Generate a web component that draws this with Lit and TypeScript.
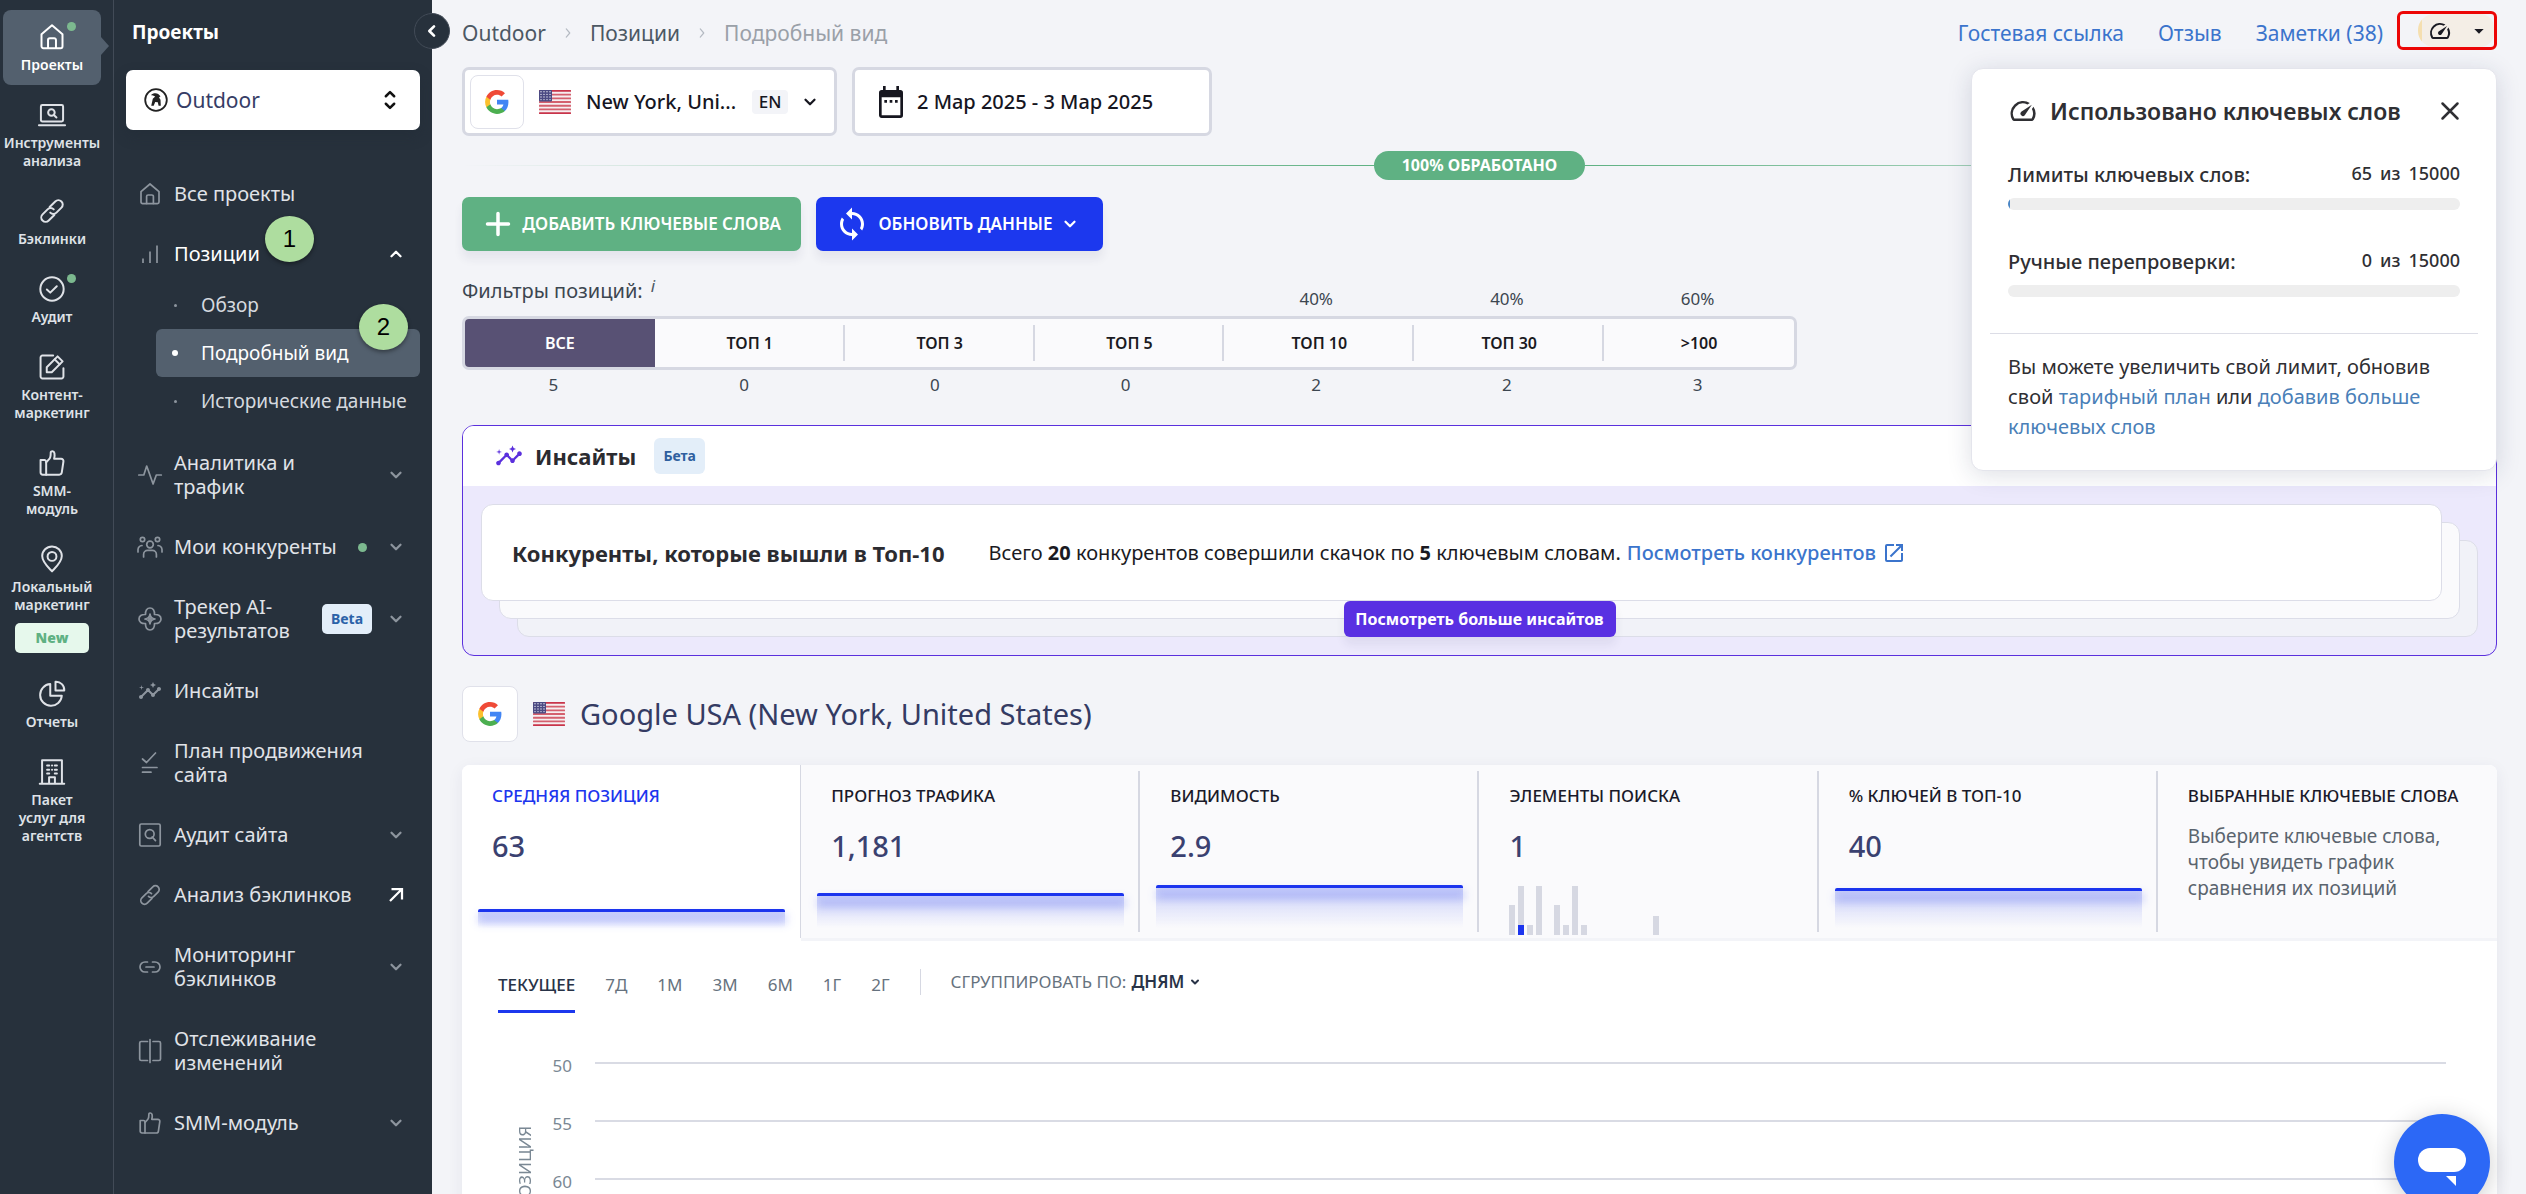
import { LitElement, html, css, svg, nothing } from "lit";
import { customElement, property, state } from "lit/decorators.js";
import { classMap } from "lit/directives/class-map.js";
import { styleMap } from "lit/directives/style-map.js";

const line = (body: unknown) => svg`<g fill="none" stroke="currentColor" stroke-linecap="round" stroke-linejoin="round">${body}</g>`;
const solid = (d: string) => svg`<path fill="currentColor" d=${d}></path>`;

const ICONS: Record<string, unknown> = {
  home: line(svg`<path d="M3 9.6 12 2l9 7.6V20a1.6 1.6 0 0 1-1.600 1.600H4.600A1.600 1.600 0 0 1 3 20z"></path><path d="M8.600 21.500v-7a1.500 1.500 0 0 1 1.500-1.500h3.800a1.500 1.500 0 0 1 1.500 1.500v7"></path>`),
  laptop: line(svg`<rect x="2.500" y="3.500" width="19" height="14" rx="1.200"></rect><path d="M0.800 20.800h22.400"></path><circle cx="11.500" cy="9.800" r="2.800"></circle><path d="m13.600 12 2.200 2.200"></path>`),
  link: line(svg`<path d="m10 8.600 4.800-4.800a3.700 3.700 0 0 1 5.300 5.300l-4.300 4.300a3.700 3.700 0 0 1-5.300 0"></path><path d="m14 15.400-4.800 4.800a3.700 3.700 0 0 1-5.300-5.300l4.300-4.300a3.700 3.700 0 0 1 5.300 0"></path>`),
  check: line(svg`<circle cx="12" cy="12" r="10"></circle><path d="m7.600 12.400 2.900 2.700 5.600-5.500"></path>`),
  edit: line(svg`<path d="M13 2.200H3.800a1.600 1.600 0 0 0-1.600 1.600v16.400a1.600 1.600 0 0 0 1.600 1.600h16.400a1.600 1.600 0 0 0 1.600-1.600V13"></path><path d="M7.500 16.500v-4.300l9.300-9.300 4.300 4.300-9.300 9.300z"></path><path d="m14.300 5.500 4.200 4.200"></path>`),
  thumb: line(svg`<path d="M2.200 9.500h3.300a1.500 1.500 0 0 1 1.500 1.500v11H4a1.800 1.800 0 0 1-1.800-1.800z"></path><path d="M7 11.500 9.900 8.200c.8-.9 1-3.300 1-5.200 0-1.400 2.800-1.500 3.200.6.400 2-.3 4.700-.3 4.700h6c1.300 0 2.200 1.200 2 2.400l-1.400 9.400a2.200 2.200 0 0 1-2.200 1.900H7"></path>`),
  pin: line(svg`<path d="M12 22.600C9 19.300 3.600 14.600 3.600 9.400a8.400 8.200 0 0 1 16.800 0c0 5.200-5.400 9.900-8.400 13.200z"></path><circle cx="12" cy="9.800" r="3.800"></circle>`),
  pie: line(svg`<path d="M10.500 3.500a9.300 9.300 0 1 0 9.900 10h-9.900z"></path><path d="M15 1.500a7 7 0 0 1 7.500 7.500H15z"></path>`),
  building: line(svg`<path d="M3.500 22V2h17v20M1.500 22h21M9.500 22v-5.500h5V22"></path><path d="M7.800 6.500h1.800M14.400 6.500h1.800M7.800 10h1.800M14.400 10h1.800M7.800 13.300h1.800M14.400 13.300h1.800M12 6.500h.1M12 10h.1"></path>`),
  bars: line(svg`<path d="M5 21v-4.500M12 21V9.500M19 21V3.500" stroke-linecap="butt"></path>`),
  pulse: line(svg`<path d="M.8 12h5l2.900-9 6.400 18 3.200-9h5"></path>`),
  people: line(svg`<circle cx="12" cy="9.500" r="3.300"></circle><path d="M5.600 22v-2.600a4 4 0 0 1 4-4h4.800a4 4 0 0 1 4 4V22"></path><circle cx="4.500" cy="4.500" r="2.200"></circle><circle cx="19.500" cy="4.500" r="2.200"></circle><path d="M0 17v-2.500a4.500 4.500 0 0 1 4-4M24 17v-2.500a4.500 4.500 0 0 0-4-4"></path>`),
  ai: line(svg`<path d="M7.500 7.500C7.300 3.500 9 1 12 1s4.700 2.500 4.500 6.500C20.500 7.300 23 9 23 12s-2.500 4.700-6.500 4.500C16.700 20.500 15 23 12 23s-4.700-2.500-4.500-6.500C3.500 16.700 1 15 1 12s2.500-4.700 6.500-4.500z"></path><path d="M12 7c.5 3.400 1.600 4.500 5 5-3.400.5-4.500 1.600-5 5-.5-3.400-1.600-4.500-5-5 3.400-.5 4.500-1.600 5-5z"></path><circle cx="12" cy="12" r="1.200"></circle>`),
  insights: solid("M21 8c-1.450 0-2.260 1.440-1.930 2.510l-3.550 3.560c-.3-.09-.74-.09-1.040 0l-2.550-2.550C12.270 10.450 11.460 9 10 9c-1.450 0-2.270 1.440-1.930 2.520l-4.560 4.550C2.440 15.740 1 16.550 1 18c0 1.100.9 2 2 2 1.450 0 2.260-1.440 1.930-2.510l4.550-4.560c.3.09.74.09 1.040 0l2.550 2.550C12.730 16.550 13.540 18 15 18c1.450 0 2.270-1.440 1.930-2.520l3.560-3.550C21.560 12.260 23 11.450 23 10c0-1.100-.9-2-2-2zM15 9l.94-2.070L18 6l-2.060-.93L15 3l-.92 2.070L12 6l2.080.93zM3.500 11 4 9l2-.5L4 8l-.5-2L3 8l-2 .5L3 9z"),
  plan: line(svg`<path d="m4.500 8 4 3.500L17.500 2M4.500 16.500H19M4.500 21.200h8.500"></path>`),
  audit: line(svg`<rect x="1.800" y="1" width="20.400" height="22" rx="1.500"></rect><circle cx="11.700" cy="11" r="4.400"></circle><path d="m14.200 14 3.300 3.600"></path>`),
  chainFlat: line(svg`<path d="M9.500 17H7A5 5 0 0 1 7 7h2.500M14.500 7H17a5 5 0 0 1 0 10h-2.500M8 12h8"></path>`),
  compare: line(svg`<path d="M9.500 2.500H3.200A1.500 1.500 0 0 0 1.700 4v16a1.500 1.500 0 0 0 1.500 1.500h6.300M12 .5v23M15 2.500h6A1.500 1.500 0 0 1 22.500 4v16a1.500 1.500 0 0 1-1.500 1.500h-6"></path>`),
  down: line(svg`<path d="m6 9 6 6 6-6"></path>`),
  up: line(svg`<path d="m6 15 6-6 6 6"></path>`),
  left: line(svg`<path d="m15 5-7 7 7 7"></path>`),
  right: line(svg`<path d="m9 5 6 7-6 7"></path>`),
  external: line(svg`<path d="M4 20 20 4M6 4h14v14" stroke-linecap="butt" stroke-linejoin="miter"></path>`),
  updown: line(svg`<path d="m7 7.500 5-5 5 5M7 16.500l5 5 5-5"></path>`),
  plus: line(svg`<path d="M12 3v18M3 12h18"></path>`),
  close: line(svg`<path d="M3 3l18 18M21 3 3 21"></path>`),
  caret: solid("M5 9h14l-7 7z"),
  gauge: solid("M20.380 8.570l-1.230 1.850a8 8 0 0 1-.22 7.580H5.070A8 8 0 0 1 15.580 6.850l1.850-1.230A10 10 0 0 0 3.350 19a2 2 0 0 0 1.720 1h13.850a2 2 0 0 0 1.740-1 10 10 0 0 0-.27-10.440zm-9.790 6.840a2 2 0 0 0 2.830 0l5.660-8.490-8.490 5.660a2 2 0 0 0 0 2.830z"),
  sync: solid("M12 4V1L8 5l4 4V6c3.310 0 6 2.690 6 6 0 1.010-.25 1.970-.7 2.800l1.460 1.460C19.540 15.030 20 13.570 20 12c0-4.420-3.580-8-8-8zm0 14c-3.310 0-6-2.690-6-6 0-1.010.25-1.970.7-2.800L5.240 7.740C4.460 8.970 4 10.430 4 12c0 4.420 3.580 8 8 8v3l4-4-4-4v3z"),
  open: solid("M19 19H5V5h7V3H5a2 2 0 0 0-2 2v14a2 2 0 0 0 2 2h14c1.100 0 2-.9 2-2v-7h-2v7zM14 3v2h3.590l-9.830 9.830 1.410 1.410L19 6.410V10h2V3h-7z"),
  calendar: solid("M9 10.500H7v2h2zm4 0h-2v2h2zm4 0h-2v2h2zM19 3h-1V0h-2v3H8V0H6v3H5a2 2 0 0 0-2 2v17c0 1.100.9 2 2 2h14a2 2 0 0 0 2-2V5a2 2 0 0 0-2-2zm0 19H5V8.500h14z"),
  google: svg`<path fill="#4285f4" d="M22.560 12.250c0-.78-.07-1.530-.2-2.250H12v4.260h5.920c-.26 1.370-1.040 2.530-2.210 3.310v2.770h3.570c2.080-1.920 3.280-4.740 3.280-8.090z"></path><path fill="#4caf50" d="M12 23c2.970 0 5.460-.98 7.280-2.660l-3.570-2.770c-.98.66-2.230 1.060-3.710 1.060-2.860 0-5.290-1.930-6.160-4.530H2.180v2.840C3.990 20.530 7.700 23 12 23z"></path><path fill="#fbc02d" d="M5.840 14.090c-.22-.66-.35-1.360-.35-2.090s.13-1.430.35-2.090V7.070H2.180C1.430 8.550 1 10.220 1 12s.43 3.450 1.180 4.930l3.660-2.840z"></path><path fill="#ef4a37" d="M12 5.380c1.620 0 3.060.56 4.210 1.640l3.150-3.150C17.450 2.090 14.970 1 12 1 7.700 1 3.990 3.470 2.180 7.070l3.660 2.840c.87-2.600 3.300-4.530 6.160-4.530z"></path>`,
  outdoor: svg`<circle cx="12" cy="12" r="10.800" fill="#fff" stroke="#222" stroke-width="1.800"></circle><path fill="#222" d="M7 7.200c1.500-1.900 5-2.400 7.200-1.200l2.300 2.300-1.500 1.200 1.500 2.300.3 6h-2.200l-.8-3.600-2.600-.2-1.500 3.800H7.200l1-4.300.6-2.700 2.400-2.300c-1.500-.9-2.900-1.200-4.200-1.300z"></path>`,
};

const icon = (name: string, cls = "") =>
  html`<svg class="icon ${cls}" viewBox="0 0 24 24" aria-hidden="true">${ICONS[name]}</svg>`;

const flag = () => html`<svg class="flag" viewBox="0 0 32 24" role="img" aria-label="США">
  <rect width="32" height="24" rx="2" fill="#f6eef0"></rect>
  ${[0, 1, 2, 3, 4, 5, 6].map((i) => svg`<rect x="0" y=${i * 3.7} width="32" height="1.850" rx="0.500" fill=${i === 0 || i === 6 ? "#c8344a" : "#d4606e"}></rect>`)}
  <rect width="13" height="11.500" rx="1" fill="#4b4a83"></rect>
  ${[0, 1, 2, 3].map((r) => [0, 1, 2, 3].map((c) => svg`<circle cx=${2 + c * 3} cy=${1.8 + r * 2.6} r="0.700" fill="#e8e8f4"></circle>`))}
</svg>`;

const shared = css`
  * { box-sizing: border-box; }
  button, select { font: inherit; color: inherit; background: none; border: 0; padding: 0; margin: 0; cursor: pointer; text-align: left; }
  a { text-decoration: none; }
  .icon { width: 24px; height: 24px; stroke-width: 2; flex: none; display: block; overflow: visible; }
  .solid { stroke-width: 0; }
  .flag { width: 32px; height: 24px; flex: none; display: block; }
`;

@customElement("app-rail")
class AppRail extends LitElement {
  static styles = [shared, css`
    :host { display: block; background: #27313c; border-right: 1px solid #424b57; }
    nav { display: flex; flex-direction: column; gap: 3px; padding: 10px 12px 0 3px; }
    .item { position: relative; display: flex; flex-direction: column; align-items: center; gap: 5px; padding: 13px 0 11px;
      color: #dfe2e7; font-size: 14px; line-height: 18px; font-weight: 600; text-align: center; border-radius: 8px; white-space: pre-line; }
    .item .icon { width: 28px; height: 28px; stroke-width: 1.700; }
    .current { background: #53606e; color: #fff; }
    .current::after { content: ""; position: absolute; left: 100%; top: 27px; border: 9px solid transparent; border-left: 8px solid #53606e; border-right: 0; }
    .dot { position: absolute; top: 12px; left: 64px; width: 9px; height: 9px; border-radius: 50%; background: #7cb98f; }
    .new { width: 74px; height: 30px; margin-top: 4px; border-radius: 5px; background: #e6f8ec; color: #5fb183; line-height: 30px; }
  `];
  private items = [
    { t: "Проекты", i: "home", dot: true, on: true }, { t: "Инструменты\nанализа", i: "laptop" }, { t: "Бэклинки", i: "link" },
    { t: "Аудит", i: "check", dot: true }, { t: "Контент-\nмаркетинг", i: "edit" }, { t: "SMM-\nмодуль", i: "thumb" },
    { t: "Локальный\nмаркетинг", i: "pin", badge: "New" }, { t: "Отчеты", i: "pie" }, { t: "Пакет\nуслуг для\nагентств", i: "building" },
  ] as { t: string; i: string; dot?: boolean; on?: boolean; badge?: string }[];
  render() {
    return html`<nav>${this.items.map((x) => html`<a href="#" class=${classMap({ item: true, current: !!x.on })}>${icon(x.i)}<span>${x.t}</span>${x.dot ? html`<i class="dot"></i>` : nothing}${x.badge ? html`<b class="new">${x.badge}</b>` : nothing}</a>`)}</nav>`;
  }
}

@customElement("app-menu")
class AppMenu extends LitElement {
  static styles = [shared, css`
    :host { display: block; position: relative; background: #27313c; color: #e0e3e8; padding: 20px 12px 0; font-size: 20px; line-height: 24px; }
    h2 { margin: 0 0 26px 6px; font-size: 19px; line-height: 24px; font-weight: 700; color: #fff; }
    .project { position: relative; display: grid; align-items: center; height: 60px; margin-bottom: 34px; background: #fff; border-radius: 7px; box-shadow: 0 6px 14px #1f28324d; }
    .project > * { grid-area: 1 / 1; }
    .project select { appearance: none; width: 100%; height: 100%; padding-left: 50px; font-size: 21px; color: #363d66; }
    .project .logo { margin-left: 18px; pointer-events: none; z-index: 1; }
    .project .pick { width: 20px; height: 20px; justify-self: end; margin-right: 20px; color: #111; stroke-width: 3; pointer-events: none; }
    .row { display: flex; align-items: center; width: 100%; padding: 18px 15px 18px 12px; gap: 12px; color: inherit; }
    .row .lead { width: 24px; height: 24px; color: #8d959e; stroke-width: 1.700; }
    .row span { flex: 1; white-space: pre-line; }
    .row .tail { width: 18px; height: 18px; color: #8d959e; stroke-width: 3; }
    .open { padding-bottom: 14px; color: #fff; }
    .open .tail, .row .out { color: #fff; }
    .dot { width: 9px; height: 9px; margin-right: 8px; border-radius: 50%; background: #7cb98f; }
    .beta { width: 50px; height: 30px; margin-right: 3px; border-radius: 5px; background: #e3eef9; color: #2b62a8; font-size: 14px; line-height: 30px; text-align: center; }
    .sub { padding: 1px 0 8px 30px; font-size: 19px; }
    .sub a { display: flex; align-items: center; height: 48px; padding-left: 17px; color: #d5d9df; border-radius: 6px; white-space: nowrap; }
    .sub a::before { content: ""; width: 3px; height: 3px; margin: 0 24px 0 1px; border-radius: 50%; background: #8d959e; }
    .sub .current { background: #53606e; color: #fff; }
    .sub .current::before { width: 6px; height: 6px; margin: 0 23px 0 -1px; background: #fff; }
    .collapse { position: absolute; right: -18px; top: 13px; width: 36px; height: 36px; display: grid; place-items: center; background: #27313c; border: 1px solid #424b57; border-radius: 50%; color: #fff; z-index: 2; }
    .collapse .icon { width: 16px; height: 16px; stroke-width: 4; }
    .step { position: absolute; width: 49px; height: 46px; border-radius: 50%; background: #aedd9f; color: #000; font: 24px/46px "Liberation Sans", sans-serif; text-align: center; box-shadow: 0 2px 4px #0006; }
    .one { left: 151px; top: 216px; }
    .two { left: 245px; top: 304px; }
  `];
  private row(i: string, t: string, tail = "down", extra: unknown = nothing) {
    return html`<a href="#" class="row ${tail === "up" ? "open" : ""}">${icon(i, i === "insights" ? "lead solid" : "lead")}<span>${t}</span>${extra}${tail ? icon(tail, tail === "external" ? "tail out" : "tail") : nothing}</a>`;
  }
  render() {
    return html`
      <h2>Проекты</h2>
      <label class="project">${icon("outdoor", "logo")}<select aria-label="Проект"><option>Outdoor</option></select>${icon("updown", "pick")}</label>
      <nav>
        ${this.row("home", "Все проекты", "")}
        ${this.row("bars", "Позиции", "up")}
        <div class="sub"><a href="#">Обзор</a><a href="#" class="current">Подробный вид</a><a href="#">Исторические данные</a></div>
        ${this.row("pulse", "Аналитика и\nтрафик")}
        ${this.row("people", "Мои конкуренты", "down", html`<i class="dot"></i>`)}
        ${this.row("ai", "Трекер AI-\nрезультатов", "down", html`<b class="beta">Beta</b>`)}
        ${this.row("insights", "Инсайты", "")}
        ${this.row("plan", "План продвижения\nсайта", "")}
        ${this.row("audit", "Аудит сайта")}
        ${this.row("link", "Анализ бэклинков", "external")}
        ${this.row("chainFlat", "Мониторинг\nбэклинков")}
        ${this.row("compare", "Отслеживание\nизменений", "")}
        ${this.row("thumb", "SMM-модуль")}
      </nav>
      <button class="collapse" aria-label="Свернуть меню">${icon("left")}</button>
      <span class="step one">1</span><span class="step two">2</span>`;
  }
}

@customElement("limits-popup")
class LimitsPopup extends LitElement {
  static styles = [shared, css`
    :host { display: block; background: #fff; border: 1px solid #e4e5ec; border-radius: 12px; box-shadow: 0 4px 24px #1e285026; padding: 26px 18px 28px; color: #2f2f33; font-size: 20px; }
    header { display: flex; align-items: center; gap: 12px; padding: 0 18px; height: 32px; }
    header .icon { width: 30px; height: 30px; }
    h3 { margin: 0; flex: 1; font-size: 23px; line-height: 32px; font-weight: 600; white-space: nowrap; }
    header button .icon { width: 20px; height: 20px; stroke-width: 3; }
    .limit { display: grid; grid-template-columns: 1fr auto; padding: 0 18px; line-height: 30px; font-weight: 500; }
    .limit output { display: flex; gap: 8px; font-size: 18px; line-height: 26px; }
    .limit progress { grid-column: 1 / -1; appearance: none; width: 100%; height: 12px; margin-top: 8px; border: 0; border-radius: 6px; background: #eee; overflow: hidden; }
    progress::-webkit-progress-bar { background: #eee; }
    progress::-webkit-progress-value { background: #4a86c5; }
    .first { margin: 33px 0 37px; }
    p { margin: 36px 0 0; padding: 18px 18px 0; border-top: 1px solid #dcdde6; line-height: 30px; }
    p a { color: #4a7fb8; }
  `];
  render() {
    return html`
      <header>${icon("gauge", "solid")}<h3>Использовано ключевых слов</h3><button aria-label="Закрыть">${icon("close")}</button></header>
      <div class="limit first"><label for="kw">Лимиты ключевых слов:</label><output><span>65</span> <span>из</span> <span>15000</span></output><progress id="kw" max="15000" value="65"></progress></div>
      <div class="limit"><label for="re">Ручные перепроверки:</label><output><span>0</span> <span>из</span> <span>15000</span></output><progress id="re" max="15000" value="0"></progress></div>
      <p>Вы можете увеличить свой лимит, обновив свой <a href="#">тарифный план</a> или <a href="#">добавив больше ключевых слов</a></p>`;
  }
}

@customElement("metric-tabs")
class MetricTabs extends LitElement {
  @property({ type: Number }) active = 0;
  static styles = [shared, css`
    :host { display: grid; grid-template-columns: repeat(6, 1fr); background: #fafafc; border-radius: 8px 8px 0 0; overflow: hidden; }
    .cell { position: relative; display: flex; flex-direction: column; height: 176px; padding: 18px 14px 10px 30px; border-bottom: 3px solid #f3f4f8; color: #1a1a2a; font-size: 17px; line-height: 26px; }
    .cell::after { content: ""; position: absolute; right: 0; top: 6px; bottom: 6px; width: 2px; background: #d6d8e2; }
    .cell:last-child::after { display: none; }
    .current { background: #fff; border-bottom-color: #fff; color: #1c35ee; }
    .current::after { top: 0; bottom: 0; width: 1px; }
    .name { font-weight: 500; white-space: nowrap; }
    .value { margin-top: 18px; color: #3a4170; font-size: 29px; line-height: 38px; font-weight: 500; }
    .spark { margin: auto 2px 0 -14px; border-top: 3px solid #1c35ee; border-radius: 2px; background: linear-gradient(#1c35ee33, #1c35ee00); position: relative; }
    .spark::before { content: ""; position: absolute; inset: 2px -2px auto 0; height: 10px; background: #1c35ee33; filter: blur(4px); }
    .histogram { display: flex; align-items: flex-end; gap: 3px; height: 50px; margin: auto 0 -7px; }
    .bar { width: 6px; background: #d6d8e2; display: flex; align-items: flex-end; }
    .hit { width: 100%; height: 10px; background: #1c35ee; }
    .hint { margin: 14px 0 0; font-size: 19px; line-height: 26px; color: #5a646e; white-space: pre-line; }
  `];
  private metrics = [
    { n: "СРЕДНЯЯ ПОЗИЦИЯ", v: "63", h: 19 }, { n: "ПРОГНОЗ ТРАФИКА", v: "1,181", h: 35 }, { n: "ВИДИМОСТЬ", v: "2.9", h: 43 },
    { n: "ЭЛЕМЕНТЫ ПОИСКА", v: "1", h: 0 }, { n: "% КЛЮЧЕЙ В ТОП-10", v: "40", h: 40 },
  ];
  private bars = [30, 49, 10, 49, 0, 30, 10, 49, 10, 0, 0, 0, 0, 0, 0, 0, 19];
  render() {
    return html`${this.metrics.map((m, i) => html`<button class=${classMap({ cell: true, current: i === this.active })} @click=${() => (this.active = i)}>
        <span class="name">${m.n}</span><span class="value">${m.v}</span>
        ${m.h ? html`<span class="spark" style=${styleMap({ height: `${m.h}px` })}></span>`
          : html`<span class="histogram">${this.bars.map((b, k) => html`<span class="bar" style=${styleMap({ height: `${b}px` })}>${k === 1 ? html`<i class="hit"></i>` : nothing}</span>`)}</span>`}
      </button>`)}
      <div class="cell"><span class="name">ВЫБРАННЫЕ КЛЮЧЕВЫЕ СЛОВА</span><p class="hint">Выберите ключевые слова,\nчтобы увидеть график\nсравнения их позиций</p></div>`;
  }
}

@customElement("app-root")
class AppRoot extends LitElement {
  @state() private filter = 0;
  @state() private period = 0;
  static styles = [shared, css`
    :host { display: block; }
    .shell { display: grid; grid-template-columns: 114px 318px minmax(0, 1fr); height: 100vh; overflow: hidden; background: #f3f4f8; color: #3c4650;
      font-family: "Noto Sans", "Open Sans", sans-serif; font-size: 20px; line-height: 28px; }
    app-menu { z-index: 1; }
    main { padding: 11px 29px 0 30px; display: flex; flex-direction: column; }
    .top { position: relative; display: flex; align-items: center; height: 39px; margin-bottom: 17px; font-size: 21px; }
    .crumbs { display: flex; align-items: center; gap: 12px; flex: 1; padding-top: 5px; }
    .crumbs a { color: #4c5864; }
    .crumbs .icon { width: 20px; height: 14px; stroke-width: 2; color: #b4bac2; }
    .crumbs .here { color: #9aa0a8; }
    .links { display: flex; gap: 34px; padding: 5px 14px 0 0; }
    .links a { color: #3b74cc; }
    .usage { width: 100px; height: 39px; border: 3px solid #ec0606; border-radius: 6px; padding-left: 18px; }
    .usage span { display: flex; align-items: center; justify-content: space-between; height: 33px; padding: 0 7px 0 10px; background: linear-gradient(90deg, #f5dfb0 4px, #f4eee6 4px); border-radius: 16px 14px 14px 16px; color: #1a1a22; }
    .usage .icon { width: 24px; height: 24px; }
    .usage .caret { width: 16px; height: 16px; }
    limits-popup { position: absolute; top: 57px; right: 0; width: 526px; z-index: 3; }
    .pickers { display: flex; gap: 15px; }
    .picker { display: flex; align-items: center; height: 69px; background: #fff; border: 3px solid #d6d8e2; border-radius: 7px; color: #16161f; font-weight: 500; white-space: nowrap; }
    .where { width: 375px; padding: 0 17px 0 5px; gap: 15px; }
    .when { width: 360px; padding: 0 20px; gap: 10px; }
    .when .icon { width: 32px; height: 32px; }
    .google { display: grid; place-items: center; flex: none; width: 54px; height: 54px; border: 1px solid #e0e1ea; border-radius: 8px; background: #fff; }
    .google .icon { width: 26px; height: 26px; }
    .place { flex: 1; }
    .lang { width: 36px; height: 24px; border-radius: 4px; background: #f3f4f8; font-size: 17px; line-height: 24px; text-align: center; }
    .icon.mini { width: 18px; height: 18px; stroke-width: 3; }
    .where .mini { margin: 0 -2px; }
    .progress { display: flex; align-items: center; height: 29px; margin: 15px 0 17px; }
    .progress i { flex: 1; height: 1px; background: linear-gradient(90deg, #5fb18300, #5fb183); }
    .progress i:last-child { background: linear-gradient(270deg, #5fb18300, #5fb183); }
    .progress b { width: 211px; height: 29px; border-radius: 15px; background: #5fb183; color: #fff; font-size: 16px; line-height: 29px; font-weight: 700; text-align: center; white-space: nowrap; }
    .actions { display: flex; gap: 15px; }
    .action { display: flex; align-items: center; justify-content: space-between; height: 54px; border-radius: 7px; color: #fff; font-size: 17px; font-weight: 600; white-space: nowrap; box-shadow: 0 8px 10px #28305012; }
    .add { width: 339px; padding: 0 20px 0 22px; background: #5fb183; }
    .add .icon { width: 28px; height: 28px; stroke-width: 3; }
    .renew { width: 287px; padding: 0 24px 0 18px; background: #1c38ee; }
    .renew .solid { width: 36px; height: 36px; }
    .filters { width: 1335px; max-width: 100%; margin-top: 26px; }
    .label { display: flex; height: 28px; gap: 8px; }
    .label sup { font-size: 17px; line-height: 18px; font-style: italic; color: #4c5864; }
    .seven { display: grid; grid-template-columns: repeat(7, 1fr); }
    .figures { margin: 0 4px 0 -4px; font-size: 17px; line-height: 26px; text-align: center; }
    .share { margin-top: -19px; height: 30px; }
    .tabs { height: 54px; border: 3px solid #d6d8e2; border-radius: 7px; background: #fafafc; }
    .tabs button { position: relative; color: #1a1a22; font-size: 16px; font-weight: 600; text-align: center; }
    .tabs button::after { content: ""; position: absolute; right: 0; top: 6px; bottom: 6px; width: 2px; background: #d6d8e2; }
    .tabs .current::after, .tabs button:last-child::after { display: none; }
    .tabs .current { background: #585174; color: #fff; border-radius: 4px 0 0 4px; }
    .counts { margin-top: 2px; }
    .insights { margin-top: 27px; border: 1px solid #5b30dd; border-radius: 12px; background: #ece9fc; overflow: hidden; }
    .insights header { display: flex; align-items: center; height: 60px; padding: 0 32px; background: #fff; }
    .insights header .icon { width: 28px; height: 28px; color: #5b30dd; }
    .insights h3 { margin: 0 18px 0 12px; font-size: 22px; font-weight: 700; color: #2b2b30; }
    .beta { width: 51px; height: 36px; border-radius: 6px; background: #e3eef9; color: #2f5f9f; font-size: 14px; line-height: 36px; text-align: center; }
    .stack { display: grid; padding: 18px; }
    .card { grid-area: 1 / 1; display: flex; align-items: center; height: 97px; padding: 0 30px; border: 1px solid #dcdde8; border-radius: 12px; background: #fff; }
    .front { margin: 0 36px 36px 0; z-index: 2; gap: 44px; color: #1a1a22; }
    .middle { margin: 18px 18px 18px; background: #fafafc; z-index: 1; }
    .back { margin: 36px 0 0 36px; background: #f1f2f8; }
    .card h4 { margin: 0; font-size: 22px; font-weight: 700; color: #2b2b30; white-space: nowrap; }
    .card p { margin: 0; display: flex; align-items: center; gap: 6px; font-size: 20px; white-space: nowrap; }
    .card a { display: flex; align-items: center; gap: 6px; color: #3b74cc; font-weight: 500; }
    .more { grid-area: 1 / 1; place-self: end center; width: 272px; height: 36px; z-index: 3; border-radius: 6px; background: #5930e2; color: #fff; font-size: 16px; font-weight: 700; text-align: center; white-space: nowrap; box-shadow: 0 8px 10px #28305012; }
    .engine { display: flex; align-items: center; gap: 15px; margin: 30px 0 23px; }
    .engine .google { width: 56px; height: 56px; }
    .engine h2 { margin: 0; font-size: 29px; line-height: 40px; font-weight: 400; color: #343b63; }
    .panel { flex: 1; background: #fff; border-radius: 8px; box-shadow: 0 4px 16px #28305012; }
    .controls { display: flex; padding: 24px 36px 0; height: 72px; font-size: 17px; color: #66727e; }
    .periods { display: flex; gap: 30px; }
    .periods button { height: 48px; padding: 3px 0 9px; border-bottom: 3px solid transparent; }
    .periods .current { color: #283347; font-weight: 500; border-color: #1c38ee; }
    .group { display: flex; align-items: center; height: 26px; margin: 4px 0 0 30px; padding-left: 30px; border-left: 1px solid #d6d8e2; gap: 5px; white-space: nowrap; }
    .group select { appearance: none; color: #283347; font-weight: 600; }
    .group .icon { width: 12px; height: 12px; stroke-width: 4; color: #283347; }
    .chart { display: flex; padding: 40px 51px 0 51px; color: #7a8894; font-size: 17px; }
    .axis { writing-mode: vertical-rl; transform: rotate(180deg); height: 100px; line-height: 24px; margin-top: 73px; text-align: right; white-space: nowrap; }
    .grid { flex: 1; display: grid; grid-auto-rows: 58px; }
    .tick { display: flex; align-items: flex-start; line-height: 26px; }
    .tick span { width: 35px; text-align: right; }
    .tick i { flex: 1; height: 2px; margin: 9px 0 0 23px; background: #d9dbe4; }
    .chat { position: fixed; right: 36px; bottom: -16px; width: 96px; height: 96px; border-radius: 50%; background: #2c68f6; box-shadow: 0 4px 24px #0003; z-index: 5; }
    .chat svg { width: 96px; height: 96px; display: block; }
  `];
  render() {
    const shares = ["", "", "", "", "40%", "40%", "60%"];
    const counts = [5, 0, 0, 0, 2, 2, 3];
    return html`<div class="shell">
      <app-rail></app-rail><app-menu></app-menu>
      <main>
        <div class="top">
          <nav class="crumbs"><a href="#">Outdoor</a>${icon("right")}<a href="#">Позиции</a>${icon("right")}<span class="here">Подробный вид</span></nav>
          <nav class="links"><a href="#">Гостевая ссылка</a><a href="#">Отзыв</a><a href="#">Заметки (38)</a></nav>
          <button class="usage" aria-label="Лимиты"><span>${icon("gauge", "solid")}${icon("caret", "solid caret")}</span></button>
          <limits-popup></limits-popup>
        </div>
        <div class="pickers">
          <button class="picker where"><span class="google">${icon("google", "solid")}</span>${flag()}<span class="place">New York, Uni...</span><span class="lang">EN</span>${icon("down", "mini")}</button>
          <button class="picker when">${icon("calendar", "solid")}<span>2 Мар 2025 - 3 Мар 2025</span></button>
        </div>
        <div class="progress"><i></i><b>100% ОБРАБОТАНО</b><i></i></div>
        <div class="actions">
          <button class="action add">${icon("plus")}<span>ДОБАВИТЬ КЛЮЧЕВЫЕ СЛОВА</span></button>
          <button class="action renew">${icon("sync", "solid")}<span>ОБНОВИТЬ ДАННЫЕ</span>${icon("down", "mini")}</button>
        </div>
        <section class="filters">
          <div class="label">Фильтры позиций: <sup>i</sup></div>
          <div class="seven figures share">${shares.map((s) => html`<span>${s}</span>`)}</div>
          <div class="seven tabs">${["ВСЕ", "ТОП 1", "ТОП 3", "ТОП 5", "ТОП 10", "ТОП 30", ">100"].map((t, i) => html`<button class=${classMap({ current: this.filter === i })} @click=${() => (this.filter = i)}>${t}</button>`)}</div>
          <div class="seven figures counts">${counts.map((s) => html`<span>${s}</span>`)}</div>
        </section>
        <section class="insights">
          <header>${icon("insights", "solid")}<h3>Инсайты</h3><b class="beta">Бета</b></header>
          <div class="stack">
            <div class="card back"></div><div class="card middle"></div>
            <div class="card front"><h4>Конкуренты, которые вышли в Топ-10</h4><p><span>Всего <b>20</b> конкурентов совершили скачок по <b>5</b> ключевым словам.</span><a href="#">Посмотреть конкурентов ${icon("open", "solid")}</a></p></div>
            <button class="more">Посмотреть больше инсайтов</button>
          </div>
        </section>
        <div class="engine"><span class="google">${icon("google", "solid")}</span>${flag()}<h2>Google USA (New York, United States)</h2></div>
        <section class="panel">
          <metric-tabs></metric-tabs>
          <div class="controls">
            <div class="periods">${["ТЕКУЩЕЕ", "7Д", "1М", "3М", "6М", "1Г", "2Г"].map((t, i) => html`<button class=${classMap({ current: this.period === i })} @click=${() => (this.period = i)}>${t}</button>`)}</div>
            <div class="group"><label for="by">СГРУППИРОВАТЬ ПО:</label><select id="by"><option>ДНЯМ</option></select>${icon("down")}</div>
          </div>
          <div class="chart"><span class="axis">ПОЗИЦИЯ</span><div class="grid">${[50, 55, 60].map((n) => html`<div class="tick"><span>${n}</span><i></i></div>`)}</div></div>
        </section>
      </main>
      <button class="chat" aria-label="Чат"><svg viewBox="0 0 96 96"><rect x="24" y="34" width="48" height="24" rx="12" fill="#fff"></rect><path d="M52 62h10v10z" fill="#fff"></path></svg></button>
    </div>`;
  }
}
